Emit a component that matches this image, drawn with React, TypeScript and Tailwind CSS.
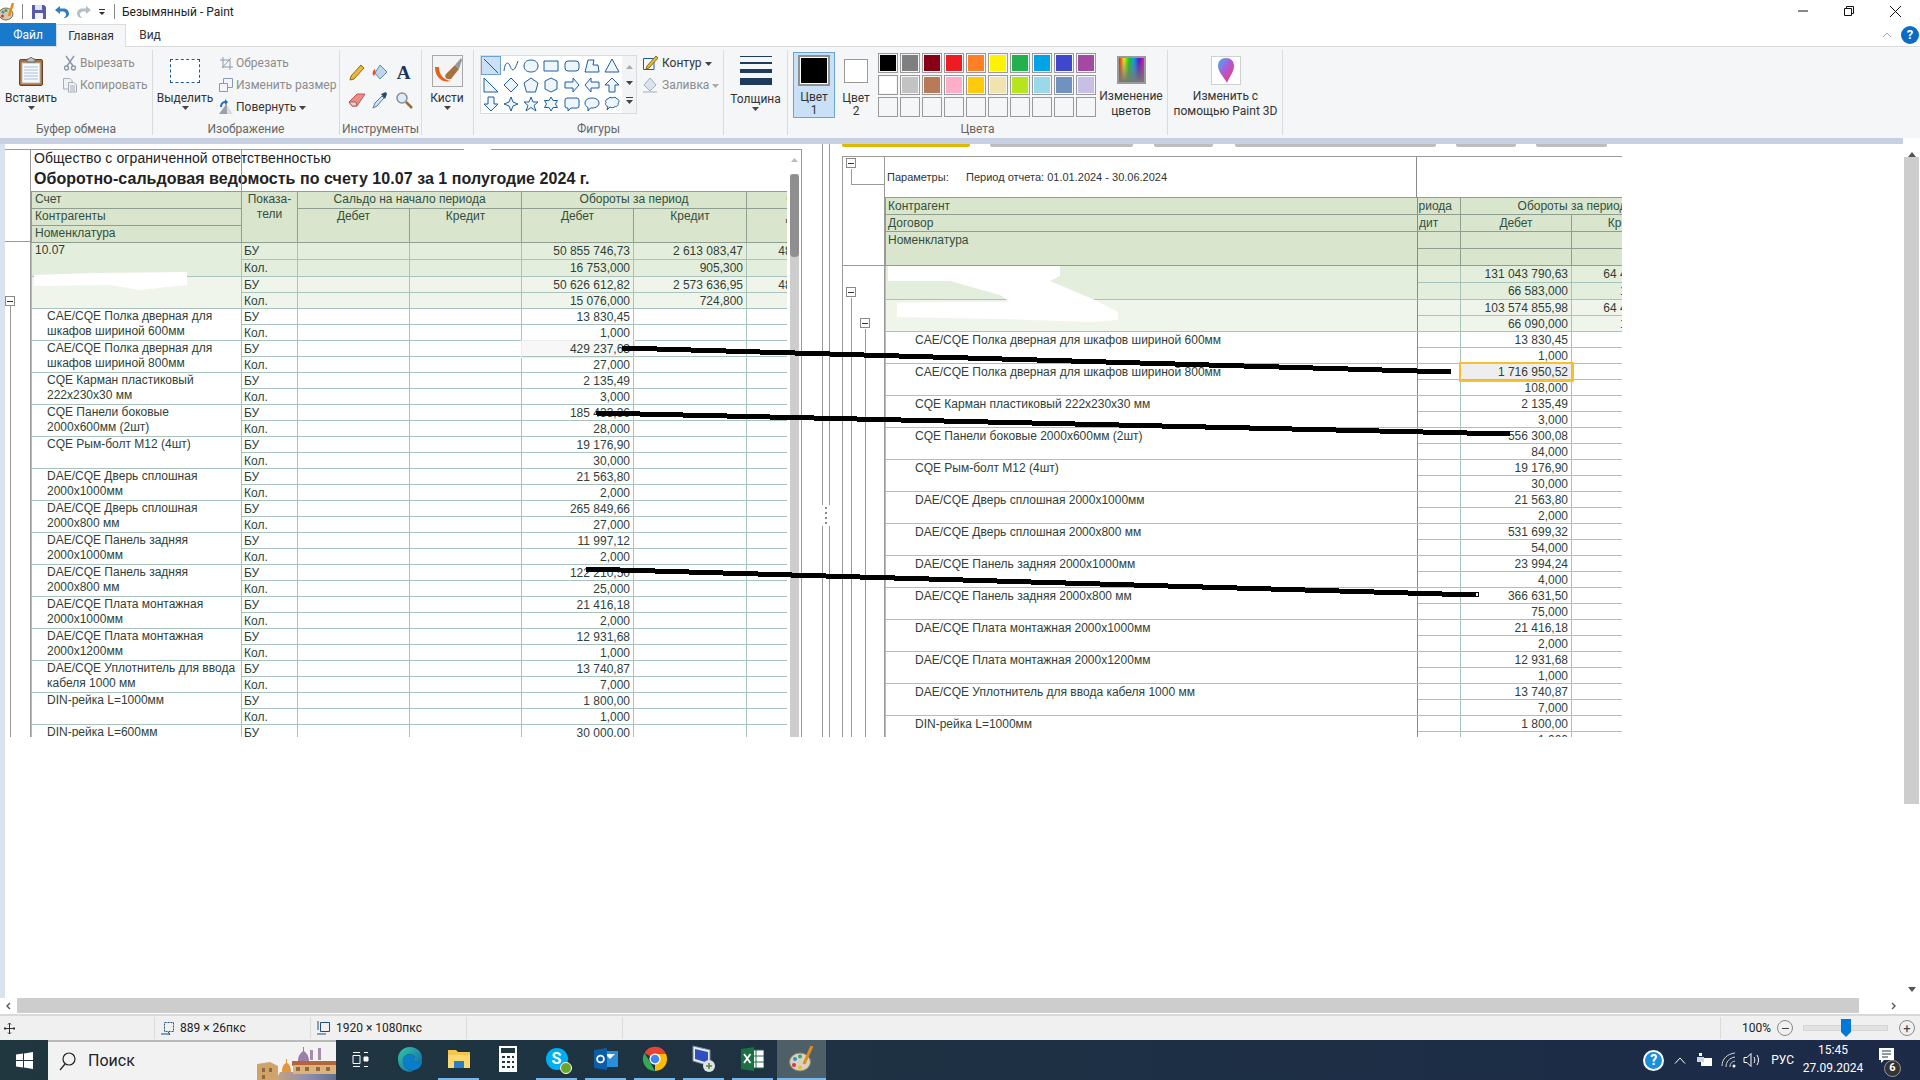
import React from 'react';

const sans = "font-['Roboto',sans-serif]";

const Caret = ({ color = '#444' }: { color?: string }) => (
  <svg width="7" height="4" viewBox="0 0 7 4" className="inline-block">
    <path d="M0 0h7L3.5 4z" fill={color} />
  </svg>
);

// shapes gallery, drawn in a 16x16 box
const shapes: { d: string }[] = [
  { d: 'M1 1L15 15' },
  { d: 'M1 13C2 4 5 3 7 8S11 15 15 3' },
  { d: 'M8 2C13 2 15 5 15 8S13 14 8 14 1 11 1 8 3 2 8 2z' },
  { d: 'M1 3H15V13H1z' },
  { d: 'M4 3H12Q15 3 15 6V10Q15 13 12 13H4Q1 13 1 10V6Q1 3 4 3z' },
  { d: 'M1 14L4 2H10L9 7H14L15 14z' },
  { d: 'M8 1L15 14H1z' },
  { d: 'M1 1L15 15H1z' },
  { d: 'M8 1L15 8 8 15 1 8z' },
  { d: 'M8 1L15 6 12.5 15H3.5L1 6z' },
  { d: 'M8 1L14 4V12L8 15 2 12V4z' },
  { d: 'M1 5H9V1L15 8 9 15V11H1z' },
  { d: 'M15 5H7V1L1 8 7 15V11H15z' },
  { d: 'M5 15V8H1L8 1 15 8H11V15z' },
  { d: 'M5 1V8H1L8 15 15 8H11V1z' },
  { d: 'M8 1L10 6 15 8 10 10 8 15 6 10 1 8 6 6z' },
  { d: 'M8 1L10 6H15L11 9.5 13 15 8 11.5 3 15 5 9.5 1 6H6z' },
  { d: 'M8 1L10 4.5H14.5L12.5 8 14.5 11.5H10L8 15 6 11.5H1.5L3.5 8 1.5 4.5H6z' },
  { d: 'M3 2H13Q15 2 15 4V10Q15 12 13 12H7L4 15V12H3Q1 12 1 10V4Q1 2 3 2z' },
  { d: 'M8 2C12 2 15 4 15 7S12 12 8 12H6.5L4 15V11.5C2 10.5 1 9 1 7 1 4 4 2 8 2z' },
  { d: 'M4 3C5 1 7 1 8 2 10 1 12 1 13 3 15 3 16 6 14 7 15 9 13 11 11 10.5 10 12 7 12 6 11L3 14 4 10.5C2 10 .5 8 2 6.5 1 5 2 3 4 3z' },
];

const palette = [
  ['#000000', '#7f7f7f', '#880015', '#ed1c24', '#ff7f27', '#fff200', '#22b14c', '#00a2e8', '#3f48cc', '#a349a4'],
  ['#ffffff', '#c3c3c3', '#b97a57', '#ffaec9', '#ffc90e', '#efe4b0', '#b5e61d', '#99d9ea', '#7092be', '#c8bfe7'],
  ['', '', '', '', '', '', '', '', '', ''],
];

const Group = ({ w, label, children }: { w: string; label?: string; children: React.ReactNode }) => (
  <div className={`${w} shrink-0 my-[3px] border-r border-[#dadbdc] flex flex-col`}>
    <div className="h-[72px] flex">{children}</div>
    <div className="h-[14px] leading-[16px] text-[12px] text-center text-[#666]">{label}</div>
  </div>
);

const SmallRow = ({ icon, text, off }: { icon: React.ReactNode; text: React.ReactNode; off?: boolean }) => (
  <div className={`h-[22px] flex items-center text-[12px] ${off ? 'text-[#8c8c8c]' : 'text-[#333]'}`}>
    <span className="w-[18px] flex justify-center shrink-0">{icon}</span>
    <span className="ml-[1px] whitespace-nowrap">{text}</span>
  </div>
);

const TitleBar = () => (
  <div className="h-[23px] flex items-center bg-white text-[12px] text-[#222]">
    <svg width="18" height="18" viewBox="0 0 18 18" className="ml-[-1px]">
      <ellipse cx="7" cy="11" rx="7" ry="6" fill="#d8c9a8" stroke="#7a6a4a" />
      <circle cx="4" cy="9" r="1.5" fill="#2f8fd6" />
      <circle cx="7" cy="7.5" r="1.5" fill="#3aa655" />
      <circle cx="3.5" cy="13" r="1.5" fill="#d33" />
      <path d="M14 0L10 13" stroke="#e08a1e" strokeWidth="2.5" />
    </svg>
    <div className="ml-[5px] w-px h-[15px] bg-[#888]" />
    <svg width="16" height="16" viewBox="0 0 16 16" className="ml-[8px]">
      <path d="M1 1H13L15 3V15H1z" fill="#5a5ba8" />
      <path d="M4 1H11V6H4z" fill="#dfe3f0" />
      <path d="M4 9H12V15H4z" fill="#f2f2f8" />
    </svg>
    <svg width="16" height="16" viewBox="0 0 16 16" className="ml-[7px]">
      <path d="M6 2L1 6 6 10V7.5H9C11 7.5 12 9 12 10.5S11 13 9.5 14C13 14 15 12 15 9.5 15 6.5 12.5 4.5 9.5 4.5H6z" fill="#2b7fc4" />
    </svg>
    <svg width="16" height="16" viewBox="0 0 16 16" className="ml-[6px]">
      <path d="M10 2L15 6 10 10V7.5H7C5 7.5 4 9 4 10.5S5 13 6.5 14C3 14 1 12 1 9.5 1 6.5 3.5 4.5 6.5 4.5H10z" fill="#b3c0cb" />
    </svg>
    <svg width="8" height="8" viewBox="0 0 8 8" className="ml-[6px]">
      <path d="M1 1H7V2H1zM1 4H7L4 7z" fill="#333" />
    </svg>
    <div className="ml-[8px] w-px h-[15px] bg-[#888]" />
    <span className="ml-[7px] whitespace-nowrap">Безымянный - Paint</span>
    <div className="ml-auto flex pr-[2px]">
      <div className="w-[46px] flex justify-center">
        <svg width="10" height="10" viewBox="0 0 10 10"><path d="M0 5H10" stroke="#111" /></svg>
      </div>
      <div className="w-[46px] flex justify-center">
        <svg width="10" height="10" viewBox="0 0 10 10" fill="none" stroke="#111"><path d="M.5 2.5H7.5V9.5H.5zM2.5 2.5V.5H9.5V7.5H7.5" /></svg>
      </div>
      <div className="w-[46px] flex justify-center">
        <svg width="11" height="11" viewBox="0 0 11 11"><path d="M0 0L11 11M11 0L0 11" stroke="#111" /></svg>
      </div>
    </div>
  </div>
);

const TabRow = () => (
  <div className="h-[23px] flex items-stretch bg-white text-[12px] relative">
    <div className="w-[56px] bg-[#1979ca] text-white flex items-center justify-center">Файл</div>
    <div className="w-[70px] bg-[#f5f6f7] border-x border-t border-[#dadbdc] text-[#333] flex items-center justify-center relative top-px z-10">Главная</div>
    <div className="w-[48px] text-[#333] flex items-center justify-center">Вид</div>
    <div className="ml-auto flex items-center">
      <svg width="10" height="6" viewBox="0 0 10 6" fill="none" className="mr-[9px]"><path d="M1 5L5 1 9 5" stroke="#aaa" /></svg>
      <div className="w-[18px] h-[18px] mr-[1px] rounded-full bg-[#0b6cc4] text-white font-bold text-[13px] flex items-center justify-center">?</div>
    </div>
  </div>
);

const Ribbon = () => (
  <div className={`h-[92px] flex bg-[#f5f6f7] border-t border-[#dadbdc] text-[#333] ${sans}`}>
    {/* Буфер обмена */}
    <Group w="w-[153px]" label="Буфер обмена">
      <div className="w-[58px] flex flex-col items-center pt-[7px] text-[12px] ml-[2px]">
        <svg width="24" height="29" viewBox="0 0 24 29">
          <rect x="0.5" y="2.5" width="23" height="26" rx="1.5" fill="#a9703d" stroke="#6b4320" />
          <rect x="3" y="6" width="18" height="20" fill="#f7f8fa" stroke="#b8bec6" />
          <path d="M5 10H19M5 13H19M5 16H19M5 19H19M5 22H19" stroke="#a8c0dc" />
          <path d="M8 5V2H10C10 0 14 0 14 2H16V5z" fill="#bfc3c9" stroke="#666" />
        </svg>
        <div className="leading-[16px] mt-[4px]">Вставить</div>
        <Caret />
      </div>
      <div className="pt-[2px] ml-[1px]">
        <SmallRow off text="Вырезать" icon={
          <svg width="12" height="16" viewBox="0 0 12 16" fill="none" stroke="#8a97a8" strokeWidth="1.4"><path d="M2 1L9 11M10 1L3 11" /><circle cx="2.5" cy="13" r="2" /><circle cx="9.5" cy="13" r="2" /></svg>
        } />
        <SmallRow off text="Копировать" icon={
          <svg width="16" height="16" viewBox="0 0 16 16" fill="#eef1f5" stroke="#a7aeb8"><path d="M1.5 1.5H8L10 3.5V12H1.5z" /><path d="M6.5 5.5H12L14.5 8V15H6.5z" /><path d="M8 9H13M8 11H13M8 13H13" /></svg>
        } />
      </div>
    </Group>
    {/* Изображение */}
    <Group w="w-[187px]" label="Изображение">
      <div className="w-[64px] flex flex-col items-center pt-[9px] text-[12px]">
        <div className="w-[30px] h-[24px] border border-dashed border-[#1e5a9a] bg-white" />
        <div className="leading-[16px] mt-[7px]">Выделить</div>
        <Caret />
      </div>
      <div className="pt-[2px]">
        <SmallRow off text="Обрезать" icon={
          <svg width="13" height="13" viewBox="0 0 13 13" fill="none" stroke="#8a9ab0"><path d="M3 0V10H13M0 3H10V13M11 1L2 11" /></svg>
        } />
        <SmallRow off text="Изменить размер" icon={
          <svg width="14" height="14" viewBox="0 0 14 14" fill="#f2f5f9" stroke="#8a9ab0"><path d="M4.5 .5H13.5V9.5H4.5z" /><path d="M.5 5.5H8.5V13.5H.5z" /></svg>
        } />
        <SmallRow text={<>Повернуть <Caret /></>} icon={
          <svg width="16" height="16" viewBox="0 0 16 16"><path d="M1 15L9 4V15z" fill="#9aa3ad" /><path d="M9 15V6L15 15z" fill="#d9dde2" /><path d="M2 8C2 4 5 2 7 2V0L10 3 7 6V4C5 4 4 6 4 8z" fill="#1f6fc0" /></svg>
        } />
      </div>
    </Group>
    {/* Инструменты */}
    <Group w="w-[82px]" label="Инструменты">
      <div className="grid grid-cols-[23px_24px_23px] grid-rows-[28px_28px] pl-[5px] pt-[8px] place-items-center">
        <svg width="16" height="18" viewBox="0 0 16 18"><path d="M2 13L12 2 15 5 5 16 1 17z" fill="#e9b83a" stroke="#8a6a1c" /></svg>
        <svg width="18" height="18" viewBox="0 0 18 18"><path d="M9 2L16 9 9 16 4 10z" fill="#bcd6ee" stroke="#5c8ab5" /><path d="M4 6C1 8 1 12 3 13 4 11 5 9 4 6z" fill="#e8501c" /></svg>
        <span className="font-['Liberation_Serif',serif] font-bold text-[19px] leading-none text-[#1d3557]">A</span>
        <svg width="18" height="14" viewBox="0 0 18 14"><path d="M1 9L9 1H17L9 13H4z" fill="#f08a84" stroke="#b65a55" /><path d="M1 9H8L9 13H4z" fill="#d8d8d8" stroke="#b65a55" /></svg>
        <svg width="16" height="18" viewBox="0 0 16 18"><path d="M1 17L3 12 10 5 12 7 5 15z" fill="#cfe4f6" stroke="#5a7c9c" /><path d="M9 3L14 1 15 3 13 8z" fill="#25496e" /></svg>
        <svg width="18" height="18" viewBox="0 0 18 18" fill="none"><circle cx="7" cy="7" r="5" fill="#dcecf8" stroke="#8a8f96" strokeWidth="1.5" /><path d="M11 11L17 17" stroke="#9a6b2e" strokeWidth="2.5" /></svg>
      </div>
    </Group>
    {/* Кисти */}
    <Group w="w-[52px]" label="">
      <div className="w-[48px] flex flex-col items-center pt-[5px] text-[12px] ml-[1px]">
        <svg width="31" height="32" viewBox="0 0 31 32">
          <rect x="0.5" y="0.5" width="30" height="31" fill="#f4f4f4" stroke="#a8a8a8" />
          <path d="M3 12C3 24 12 28 19 26 12 25 7 20 7 12z" fill="#e8601c" />
          <path d="M14 19L23 10 27 14 19 24C14 25 12 22 14 19z" fill="#a5713d" />
          <path d="M23 10L29 3 30 5 27 14z" fill="#8f99a6" />
        </svg>
        <div className="leading-[16px] mt-[3px]">Кисти</div>
        <Caret />
      </div>
    </Group>
    {/* Фигуры */}
    <Group w="w-[250px]" label="Фигуры">
      <div className="ml-[6px] mt-[5px] w-[157px] h-[59px] border border-[#dadbdc] bg-white flex">
        <div className="w-[141px] grid grid-cols-7 grid-rows-3">
          {shapes.map((s, i) => (
            <div key={i} className={`flex items-center justify-center ${i === 0 ? 'bg-[#c9e0f7] border border-[#6aa3d8]' : ''}`}>
              <svg width="16" height="16" viewBox="0 0 16 16" fill={i < 2 ? 'none' : '#eef5fb'} stroke="#1d5f9e" strokeLinejoin="round"><path d={s.d} /></svg>
            </div>
          ))}
        </div>
        <div className="flex-1 bg-[#f2f3f5] flex flex-col items-center justify-around py-[3px]">
          <svg width="7" height="4" viewBox="0 0 7 4"><path d="M0 4L3.5 0 7 4z" fill="#aaa" /></svg>
          <Caret />
          <svg width="7" height="7" viewBox="0 0 7 7"><path d="M0 0H7V1H0zM0 3H7L3.5 7z" fill="#444" /></svg>
        </div>
      </div>
      <div className="pt-[2px] ml-[4px]">
        <SmallRow text={<span className="ml-[2px]">Контур <Caret /></span>} icon={
          <svg width="16" height="16" viewBox="0 0 16 16" fill="none"><path d="M1.5 3.5H12V14.5H1.5z" stroke="#1d5f9e" /><path d="M5 11L14 1 16 3 7 13 4 14z" fill="#e9b83a" stroke="#8a6a1c" /></svg>
        } />
        <SmallRow off text={<span className="ml-[2px]">Заливка <Caret color="#aaa" /></span>} icon={
          <svg width="16" height="16" viewBox="0 0 16 16"><path d="M8 1L14 8 8 14 2 8z" fill="#dbe4ee" stroke="#9fb0c2" /><path d="M1 14H15V16H1z" fill="#c9d2dc" /></svg>
        } />
      </div>
    </Group>
    {/* Толщина */}
    <Group w="w-[64px]" label="">
      <div className="w-[63px] flex flex-col items-center pt-[6px] text-[12px]">
        <div className="w-[32px] flex flex-col">
          <div className="h-px bg-[#1f3a5f]" />
          <div className="h-[2px] mt-[5px] bg-[#1f3a5f]" />
          <div className="h-[4px] mt-[5px] bg-[#1f3a5f]" />
          <div className="h-[7px] mt-[5px] bg-[#1f3a5f]" />
        </div>
        <div className="leading-[16px] mt-[6px]">Толщина</div>
        <Caret />
      </div>
    </Group>
    {/* Цвета */}
    <Group w="w-[380px]" label="Цвета">
      <div className="ml-[5px] mt-[2px] w-[42px] h-[66px] bg-[#c9e0f7] border border-[#6aa3d8] flex flex-col items-center pt-[2px] text-[12px] leading-[14px]">
        <div className="w-[32px] h-[32px] bg-black border-2 border-[#8f8f8f] outline outline-1 outline-white -outline-offset-[3px]" />
        <div className="mt-[4px]">Цвет</div>
        <div className="mt-[-1px]">1</div>
      </div>
      <div className="ml-[8px] w-[26px] flex flex-col items-center pt-[9px] text-[12px] leading-[14px]">
        <div className="w-[24px] h-[24px] bg-white border border-[#9a9a9a]" />
        <div className="mt-[8px]">Цвет</div>
        <div className="mt-[-1px]">2</div>
      </div>
      <div className="ml-[9px] mt-[3px] grid grid-cols-10 gap-[2px] h-[64px] w-[218px]">
        {palette.flat().map((c, i) => (
          <div key={i} className="w-[20px] h-[20px] border border-[#9a9a9a] p-px">
            <div className="w-full h-full" style={{ background: c || 'transparent' }} />
          </div>
        ))}
      </div>
      <div className="ml-[1px] w-[68px] flex flex-col items-center pt-[6px] text-[12px] leading-[15px]">
        <div className="w-[29px] h-[28px] border-2 border-[#9a9a9a] bg-[linear-gradient(to_bottom,transparent,#777),linear-gradient(to_right,#ee1111,#eeee11,#11cc22,#1199ee,#5511cc,#ee11aa)]" />
        <div className="mt-[5px] whitespace-nowrap">Изменение</div>
        <div>цветов</div>
      </div>
    </Group>
    {/* Paint 3D */}
    <Group w="w-[115px]" label="">
      <div className="w-full flex flex-col items-center pt-[6px] text-[12px] leading-[15px] ml-[1px]">
        <div className="w-[30px] h-[29px] border border-[#d0d0d0] bg-white flex items-center justify-center">
          <svg width="16" height="25" viewBox="0 0 16 25">
            <defs>
              <linearGradient id="drop" x1="0" y1="0" x2="1" y2="1">
                <stop offset="0" stopColor="#35b8f0" />
                <stop offset="0.45" stopColor="#b05ad8" />
                <stop offset="1" stopColor="#f03a5c" />
              </linearGradient>
            </defs>
            <path d="M8 0C13 0 16 3 16 8 16 14 11 19 9 25 6 19 0 14 0 8 0 3 3 0 8 0z" fill="url(#drop)" />
          </svg>
        </div>
        <div className="mt-[4px] whitespace-nowrap">Изменить с</div>
        <div className="whitespace-nowrap">помощью Paint 3D</div>
      </div>
    </Group>
    <div className="flex-1" />
  </div>
);

type Row = { name: string[]; sum: string; qty: string };

const leftRows: Row[] = [
  { name: ['CAE/CQE Полка дверная для', 'шкафов шириной 600мм'], sum: '13 830,45', qty: '1,000' },
  { name: ['CAE/CQE Полка дверная для', 'шкафов шириной 800мм'], sum: '429 237,63', qty: '27,000' },
  { name: ['CQE Карман пластиковый', '222х230х30 мм'], sum: '2 135,49', qty: '3,000' },
  { name: ['CQE Панели боковые', '2000х600мм (2шт)'], sum: '185 433,36', qty: '28,000' },
  { name: ['CQE Рым-болт М12 (4шт)'], sum: '19 176,90', qty: '30,000' },
  { name: ['DAE/CQE Дверь сплошная', '2000х1000мм'], sum: '21 563,80', qty: '2,000' },
  { name: ['DAE/CQE Дверь сплошная', '2000х800 мм'], sum: '265 849,66', qty: '27,000' },
  { name: ['DAE/CQE Панель задняя', '2000х1000мм'], sum: '11 997,12', qty: '2,000' },
  { name: ['DAE/CQE Панель задняя', '2000х800 мм'], sum: '122 210,50', qty: '25,000' },
  { name: ['DAE/CQE Плата монтажная', '2000х1000мм'], sum: '21 416,18', qty: '2,000' },
  { name: ['DAE/CQE Плата монтажная', '2000х1200мм'], sum: '12 931,68', qty: '1,000' },
  { name: ['DAE/CQE Уплотнитель для ввода', 'кабеля 1000 мм'], sum: '13 740,87', qty: '7,000' },
  { name: ['DIN-рейка L=1000мм'], sum: '1 800,00', qty: '1,000' },
  { name: ['DIN-рейка L=600мм'], sum: '30 000,00', qty: '' },
];

const rightRows: Row[] = [
  { name: ['CAE/CQE Полка дверная для шкафов шириной 600мм'], sum: '13 830,45', qty: '1,000' },
  { name: ['CAE/CQE Полка дверная для шкафов шириной 800мм'], sum: '1 716 950,52', qty: '108,000' },
  { name: ['CQE Карман пластиковый 222х230х30 мм'], sum: '2 135,49', qty: '3,000' },
  { name: ['CQE Панели боковые 2000х600мм (2шт)'], sum: '556 300,08', qty: '84,000' },
  { name: ['CQE Рым-болт М12 (4шт)'], sum: '19 176,90', qty: '30,000' },
  { name: ['DAE/CQE Дверь сплошная 2000х1000мм'], sum: '21 563,80', qty: '2,000' },
  { name: ['DAE/CQE Дверь сплошная 2000х800 мм'], sum: '531 699,32', qty: '54,000' },
  { name: ['DAE/CQE Панель задняя 2000х1000мм'], sum: '23 994,24', qty: '4,000' },
  { name: ['DAE/CQE Панель задняя 2000х800 мм'], sum: '366 631,50', qty: '75,000' },
  { name: ['DAE/CQE Плата монтажная 2000х1000мм'], sum: '21 416,18', qty: '2,000' },
  { name: ['DAE/CQE Плата монтажная 2000х1200мм'], sum: '12 931,68', qty: '1,000' },
  { name: ['DAE/CQE Уплотнитель для ввода кабеля 1000 мм'], sum: '13 740,87', qty: '7,000' },
  { name: ['DIN-рейка L=1000мм'], sum: '1 800,00', qty: '1,000' },
];

const hd = 'bg-[#d9e5cd] border border-[#8f9f8f] p-0 align-top font-normal text-[#33503f] text-center leading-[15px]';
const cell = 'border border-[#a8c2bc] p-0 whitespace-nowrap';
const num = `${cell} text-right pr-[3px]`;

const LeftTable = () => (
  <table className="table-fixed border-collapse w-[939px] text-[12px] leading-[14px] text-[#333]">
    <colgroup>
      <col className="w-[210px]" />
      <col className="w-[56px]" />
      <col className="w-[112px]" />
      <col className="w-[112px]" />
      <col className="w-[112px]" />
      <col className="w-[113px]" />
      <col className="w-[112px]" />
      <col className="w-[112px]" />
    </colgroup>
    <thead>
      <tr className="h-[17px]">
        <th className={`${hd} !text-left pl-[3px]`}>Счет</th>
        <th rowSpan={3} className={hd}>Показа-<br />тели</th>
        <th colSpan={2} className={hd}>Сальдо на начало периода</th>
        <th colSpan={2} className={hd}>Обороты за период</th>
        <th colSpan={2} className={hd}>Сальдо на конец периода</th>
      </tr>
      <tr className="h-[17px]">
        <th className={`${hd} !text-left pl-[3px]`}>Контрагенты</th>
        {['Дебет', 'Кредит', 'Дебет', 'Кредит', 'Дебет', 'Кредит'].map((t, i) => (
          <th key={i} rowSpan={2} className={hd}>{t}</th>
        ))}
      </tr>
      <tr className="h-[17px]">
        <th className={`${hd} !text-left pl-[3px]`}>Номенклатура</th>
      </tr>
    </thead>
    <tbody className="text-[#2f3f38]">
      <tr className="h-[17px] bg-[#e4eedc]">
        <td rowSpan={2} className={`${cell} align-top pl-[3px]`}>10.07</td>
        <td className={`${cell} pl-[2px]`}>БУ</td>
        <td className={cell} /><td className={cell} />
        <td className={num}>50 855 746,73</td>
        <td className={num}>2 613 083,47</td>
        <td className={num}>48 242 663,26</td>
        <td className={cell} />
      </tr>
      <tr className="h-[17px] bg-[#e4eedc]">
        <td className={`${cell} pl-[2px]`}>Кол.</td>
        <td className={cell} /><td className={cell} />
        <td className={num}>16 753,000</td>
        <td className={num}>905,300</td>
        <td className={cell} /><td className={cell} />
      </tr>
      <tr className="h-[16px] bg-[#f0f5ec]">
        <td rowSpan={2} className={cell} />
        <td className={`${cell} pl-[2px]`}>БУ</td>
        <td className={cell} /><td className={cell} />
        <td className={num}>50 626 612,82</td>
        <td className={num}>2 573 636,95</td>
        <td className={num}>48 052 975,87</td>
        <td className={cell} />
      </tr>
      <tr className="h-[16px] bg-[#f0f5ec]">
        <td className={`${cell} pl-[2px]`}>Кол.</td>
        <td className={cell} /><td className={cell} />
        <td className={num}>15 076,000</td>
        <td className={num}>724,800</td>
        <td className={cell} /><td className={cell} />
      </tr>
      {leftRows.map((r) => (
        <React.Fragment key={r.name.join() + r.sum}>
          <tr className="h-[16px]">
            <td rowSpan={2} className={`${cell} align-top pl-[15px] leading-[15px]`}>
              {r.name.map((n) => <div key={n}>{n}</div>)}
            </td>
            <td className={`${cell} pl-[2px]`}>БУ</td>
            <td className={cell} /><td className={cell} />
            <td className={`${num} ${r.sum === '429 237,63' ? 'bg-[#f7f7f7] outline outline-[#ececec]' : ''}`}>{r.sum}</td>
            <td className={cell} /><td className={cell} /><td className={cell} />
          </tr>
          <tr className="h-[16px]">
            <td className={`${cell} pl-[2px]`}>Кол.</td>
            <td className={cell} /><td className={cell} />
            <td className={num}>{r.qty}</td>
            <td className={cell} /><td className={cell} /><td className={cell} />
          </tr>
        </React.Fragment>
      ))}
    </tbody>
  </table>
);

const nameEdge = 'border-r-[#8a8a8a]';

const RightTable = () => (
  <table className="table-fixed border-collapse w-[798px] text-[12px] leading-[14px] text-[#333]">
    <colgroup>
      <col className="w-[532px]" />
      <col className="w-[43px]" />
      <col className="w-[111px]" />
      <col className="w-[112px]" />
    </colgroup>
    <thead>
      <tr className="h-[17px]">
        <th className={`${hd} !text-left pl-[2px] pt-[1px] ${nameEdge}`}>Контрагент</th>
        <th className={`${hd} !text-right pr-[8px] pt-[1px]`}>риода</th>
        <th colSpan={2} className={`${hd} pt-[1px]`}>Обороты за период</th>
      </tr>
      <tr className="h-[17px]">
        <th className={`${hd} !text-left pl-[2px] pt-[1px] ${nameEdge}`}>Договор</th>
        <th className={`${hd} !text-left pl-[1px] pt-[1px]`}>дит</th>
        <th className={`${hd} pt-[1px]`}>Дебет</th>
        <th className={`${hd} pt-[1px]`}>Кредит</th>
      </tr>
      <tr className="h-[17px]">
        <th rowSpan={2} className={`${hd} !text-left pl-[2px] pt-[1px] ${nameEdge}`}>Номенклатура</th>
        <th className={hd} /><th className={hd} /><th className={hd} />
      </tr>
      <tr className="h-[17px]">
        <th className={hd} /><th className={hd} /><th className={hd} />
      </tr>
    </thead>
    <tbody className="text-[#2f3f38]">
      <tr className="h-[17px] bg-[#e4eedc]">
        <td rowSpan={2} className={`${cell} ${nameEdge}`} />
        <td className={cell} />
        <td className={num}>131 043 790,63</td>
        <td className={num}>64 410 875,48</td>
      </tr>
      <tr className="h-[17px] bg-[#e4eedc]">
        <td className={cell} />
        <td className={num}>66 583,000</td>
        <td className={num}>18 430,000</td>
      </tr>
      <tr className="h-[16px] bg-[#f0f5ec]">
        <td rowSpan={2} className={`${cell} ${nameEdge}`} />
        <td className={cell} />
        <td className={num}>103 574 855,98</td>
        <td className={num}>64 420 102,31</td>
      </tr>
      <tr className="h-[16px] bg-[#f0f5ec]">
        <td className={cell} />
        <td className={num}>66 090,000</td>
        <td className={num}>14 920,000</td>
      </tr>
      {rightRows.map((r) => {
        const picked = r.sum === '1 716 950,52';
        return (
          <React.Fragment key={r.sum + r.qty}>
            <tr className="h-[16px]">
              <td rowSpan={2} className={`${cell} ${nameEdge} align-top pl-[29px] pt-[1px]`}>{r.name[0]}</td>
              <td className={cell} />
              <td className={`${num} ${picked ? 'bg-[#eeeeee] outline-2 outline-[#f5c12e] relative' : ''}`}>{r.sum}</td>
              <td className={cell} />
            </tr>
            <tr className="h-[16px]">
              <td className={cell} />
              <td className={num}>{r.qty}</td>
              <td className={cell} />
            </tr>
          </React.Fragment>
        );
      })}
    </tbody>
  </table>
);

const MinusBox = ({ x, y }: { x: number; y: number }) => (
  <g>
    <rect x={x + 0.5} y={y + 0.5} width="9" height="9" fill="#fff" stroke="#8a8a8a" />
    <path d={`M${x + 2} ${y + 5}H${x + 8}`} stroke="#333" shapeRendering="crispEdges" />
  </g>
);

const LeftPanel = () => (
  <div className="flex w-[797px] h-[588px] mt-[5px] border-t border-r border-[#9a9a9a] relative">
    <svg width="25" height="587" className="shrink-0" fill="none" stroke="#9a9a9a" shapeRendering="crispEdges">
      <path d="M0 91.5H25M5.5 155V587" />
      <MinusBox x={0} y={146} />
    </svg>
    <div className="w-[757px] border-l border-[#9a9a9a] overflow-hidden relative font-['Liberation_Sans',Arial,sans-serif]">
      <div className="h-[41px] bg-white text-[#222]">
        <div className="text-[14px] leading-[17px] pl-[3px] tracking-[0.1px]">Общество с ограниченной ответственностью</div>
        <div className="text-[16px] leading-[20px] font-bold pl-[3px] mt-[2px] whitespace-nowrap tracking-[0.05px]">Оборотно-сальдовая ведомость по счету 10.07 за 1 полугодие 2024 г.</div>
      </div>
      <LeftTable />
      <div className="absolute left-[210px] top-0 h-[41px] w-px bg-[#9a9a9a]" />
    </div>
    <div className="ml-[3px] w-[9px] flex flex-col bg-[#cdcdcd] relative">
      <div className="h-[24px] bg-white flex items-start justify-center pt-[8px]">
        <svg width="7" height="4" viewBox="0 0 7 4"><path d="M0 4L3.5 0 7 4z" fill="#bbb" /></svg>
      </div>
      <div className="h-[83px] bg-[#8f8f8f] rounded-[4px]" />
    </div>
    <div className="absolute -top-px left-[459px] w-[27px] h-[2px] bg-white" />
  </div>
);

const RightPanel = () => (
  <div className="flex ml-[20px] h-[593px]">
    <div className="w-[8px] border-x border-[#9a9a9a] relative">
      <div className="absolute -left-[1px] top-[361px] w-[8px] flex flex-col items-center gap-[3px] bg-white py-[2px]">
        <div className="w-[2px] h-[2px] bg-[#888]" />
        <div className="w-[2px] h-[2px] bg-[#888]" />
        <div className="w-[2px] h-[2px] bg-[#888]" />
        <div className="w-[2px] h-[2px] bg-[#888]" />
      </div>
    </div>
    <div className="ml-[12px] flex flex-col">
      <div className="h-[3px] flex">
        <div className="w-[128px] bg-[#e0b800] rounded-b-[2px]" />
        <div className="ml-[20px] w-[143px] bg-[#bdbdbd] rounded-b-[2px]" />
        <div className="ml-[21px] w-[59px] bg-[#bdbdbd] rounded-b-[2px]" />
        <div className="ml-[22px] w-[201px] bg-[#bdbdbd] rounded-b-[2px]" />
        <div className="ml-[20px] w-[60px] bg-[#bdbdbd] rounded-b-[2px]" />
        <div className="ml-[20px] w-[71px] bg-[#bdbdbd] rounded-b-[2px]" />
      </div>
      <div className="mt-[9px] w-[780px] h-[581px] flex border-t border-[#9a9a9a]">
        <svg width="42" height="580" className="shrink-0 border-l border-[#9a9a9a]" fill="none" stroke="#9a9a9a" shapeRendering="crispEdges">
          <path d="M8.5 12V27.5H42M0 108.5H42M8.5 141V580M22 172V580" />
          <MinusBox x={3} y={1} />
          <MinusBox x={3} y={130} />
          <MinusBox x={17} y={161} />
        </svg>
        <div className="w-[738px] overflow-hidden border-l border-[#9a9a9a] font-['Liberation_Sans',Arial,sans-serif]">
          <div className="h-[40px] w-[532px] border-r border-[#8a8a8a] bg-white flex items-center text-[11px] text-[#333]">
            <span className="ml-[2px] w-[79px]">Параметры:</span>
            <span>Период отчета: 01.01.2024 - 30.06.2024</span>
          </div>
          <RightTable />
        </div>
      </div>
    </div>
  </div>
);

const Canvas = () => (
  <div className="h-[860px] flex">
    <div className="flex-1 flex flex-col">
      <div className="h-[6px] bg-[#c7d1e3]" />
      <div className="flex-1 flex bg-white border-l-[5px] border-[#d9e2f1]">
        <LeftPanel />
        <RightPanel />
      </div>
    </div>
    <div className="w-[17px] flex flex-col items-stretch bg-white">
      <div className="h-[19px] flex items-end justify-center">
        <svg width="8" height="5" viewBox="0 0 8 5"><path d="M0 5L4 0 8 5z" fill="#555" /></svg>
      </div>
      <div className="mt-[0px] h-[647px] mx-[1px] bg-[#cdcdcd]" />
      <div className="flex-1 flex items-end justify-center pb-[6px]">
        <svg width="8" height="5" viewBox="0 0 8 5"><path d="M0 0L4 5 8 0z" fill="#555" /></svg>
      </div>
    </div>
  </div>
);

const HScroll = () => (
  <div className="h-[16px] flex bg-white">
    <div className="w-[17px] h-[15px] flex items-center justify-center">
      <svg width="5" height="8" viewBox="0 0 5 8" fill="none"><path d="M4 1L1 4 4 7" stroke="#555" strokeWidth="1.4" /></svg>
    </div>
    <div className="w-[1842px] h-[15px] bg-[#cdcdcd]" />
    <div className="w-[61px] h-[15px] flex items-center pl-[32px]">
      <svg width="5" height="8" viewBox="0 0 5 8" fill="none"><path d="M1 1L4 4 1 7" stroke="#555" strokeWidth="1.4" /></svg>
    </div>
  </div>
);

const StatusCell = ({ children, w }: { children?: React.ReactNode; w: string }) => (
  <div className={`${w} my-[1px] border-r border-[#dcdcdc] flex items-center pl-[10px] gap-[3px] text-[12px] text-[#222]`}>{children}</div>
);

const StatusBar = () => (
  <div className={`h-[26px] flex bg-[#f0f0f0] border-t-2 border-[#d9d9d9] ${sans}`}>
    <StatusCell w="w-[155px] !pl-[4px]">
      <svg width="11" height="11" viewBox="0 0 11 11" fill="none" stroke="#333"><path d="M5.5 0V11M0 5.5H11M4 1.5L5.5 0 7 1.5M4 9.5L5.5 11 7 9.5M1.5 4L0 5.5 1.5 7M9.5 4L11 5.5 9.5 7" /></svg>
    </StatusCell>
    <StatusCell w="w-[156px] !pl-[6px]">
      <svg width="14" height="14" viewBox="0 0 14 14" fill="none" stroke="#1d4f7a"><path d="M3.5 1.5H12.5V10.5H3.5z" strokeDasharray="2 1" /><path d="M0 13H9M7 11L9 13 7 15" /></svg>
      <span className="ml-[2px]">889 × 26пкс</span>
    </StatusCell>
    <StatusCell w="w-[156px] !pl-[6px]">
      <svg width="14" height="14" viewBox="0 0 14 14" fill="none" stroke="#1d4f7a"><path d="M3.5 1.5H12.5V10.5H3.5z" /><path d="M0 13H9M1 0V9" /></svg>
      <span className="ml-[2px]">1920 × 1080пкс</span>
    </StatusCell>
    <StatusCell w="w-[156px]" />
    <StatusCell w="w-[1098px]" />
    <div className="flex-1 flex items-center text-[12px] text-[#222]">
      <span className="ml-[21px] w-[31px]">100%</span>
      <span className="ml-[4px] w-[16px] h-[16px] rounded-full border border-[#888] flex items-center justify-center">
        <span className="w-[7px] h-px bg-[#444]" />
      </span>
      <div className="ml-[10px] w-[85px] h-[6px] bg-[#e2e2e2] border border-[#d4d4d4] flex justify-start relative">
        <svg width="10" height="18" viewBox="0 0 10 18" className="absolute left-[37px] -top-[7px]"><path d="M0 0H10V13L5 18 0 13z" fill="#0078d7" /></svg>
      </div>
      <span className="ml-[11px] w-[16px] h-[16px] rounded-full border border-[#888] flex items-center justify-center text-[13px] leading-none text-[#444]">+</span>
    </div>
  </div>
);

const BingPicture = () => (
  <svg width="80" height="38" viewBox="0 0 80 38" className="absolute right-0 top-0">
    <defs>
      <linearGradient id="water" x1="0" y1="0" x2="1" y2="0">
        <stop offset="0" stopColor="#c9a27c" />
        <stop offset="0.5" stopColor="#8f8fb0" />
        <stop offset="1" stopColor="#5f6f8f" />
      </linearGradient>
    </defs>
    <path d="M20 38L24 30H80V38z" fill="url(#water)" />
    <path d="M1 22L14 20 22 24V38H1z" fill="#d0a36a" />
    <path d="M6 26H9V30H6zM13 26H16V30H13zM6 33H9V37H6z" fill="#8a6a44" />
    <path d="M26 30C26 24 28 22 30 21V17H31V21C33 22 35 24 35 30z" fill="#e3963a" />
    <path d="M42 19C42 13 45 11 47 9V5H48V9C50 11 53 13 53 19z" fill="#9a80a8" />
    <path d="M54 8H57V18H54zM62 6H65V18H62z" fill="#a58ca8" />
    <path d="M36 19H80V24H36z" fill="#b5653a" />
    <path d="M37 23H80V32H37z" fill="#dcb27a" />
    <path d="M40 25H44V29H40zM49 25H53V29H49zM60 25H64V29H60zM70 25H74V29H70z" fill="#8c6a42" />
  </svg>
);

const TaskCell = ({ active, on, children }: { active?: boolean; on?: boolean; children?: React.ReactNode }) => (
  <div className={`w-[49px] shrink-0 flex flex-col ${active ? 'bg-[#4e5f68]' : ''}`}>
    <div className="flex-1 flex items-center justify-center">{children}</div>
    <div className={`h-[2px] ${active ? 'bg-[#76b9ed]' : on ? 'mx-[4px] bg-[#76b9ed]' : ''}`} />
  </div>
);

const Taskbar = () => (
  <div className={`h-[40px] flex bg-linear-to-r from-[#20373f] to-[#1c2a48] text-white ${sans}`}>
    <div className="w-[48px] flex items-center justify-center">
      <svg width="17" height="17" viewBox="0 0 17 17" fill="#fff"><path d="M0 2.5L7 1.5V8H0zM8 1.4L17 0V8H8zM0 9H7V15.5L0 14.5zM8 9H17V17L8 15.6z" /></svg>
    </div>
    <div className="w-[288px] bg-[#f2f2f2] border-t-2 border-[#b9b9b9] flex items-center relative text-[#222] text-[16px]">
      <svg width="17" height="19" viewBox="0 0 17 19" fill="none" stroke="#222" strokeWidth="1.2" className="ml-[11px]"><circle cx="10" cy="7" r="6" /><path d="M6 12L1 18" /></svg>
      <span className="ml-[12px]">Поиск</span>
      <BingPicture />
    </div>
    <TaskCell>
      <svg width="17" height="17" viewBox="0 0 17 17" fill="none" stroke="#fff"><path d="M1 1.5H8M1 15.5H8M1 4.5H8V12.5H1zM12 1.5H16M12 15.5H16" /><path d="M12 6H16V10H12z" fill="#fff" /></svg>
    </TaskCell>
    <TaskCell>
      <svg width="26" height="26" viewBox="0 0 26 26">
        <defs>
          <linearGradient id="edge" x1="0" y1="0" x2="1" y2="1">
            <stop offset="0" stopColor="#36c9a0" />
            <stop offset="1" stopColor="#0b5fb0" />
          </linearGradient>
        </defs>
        <path d="M13 1C20 1 25 6 25 12 25 16 21 17 18 16 15 15 16 12 18 11 16 7 8 7 6 13 5 19 10 25 17 24 15 26 12 26 10 25.5 4 24 1 19 1 13 1 6 6 1 13 1z" fill="url(#edge)" />
        <path d="M6 13C8 7 16 7 18 11 16 12 15 15 18 16 21 17 25 16 25 12V15C25 20 21 24 17 24 10 25 5 19 6 13z" fill="#0a7ecb" />
      </svg>
    </TaskCell>
    <TaskCell on>
      <svg width="22" height="20" viewBox="0 0 22 20"><path d="M0 1H8L10 3H22V19H0z" fill="#f4c64e" /><path d="M0 6H22V19H0z" fill="#fbd96c" /><path d="M6 12H16V19H6z" fill="#2a7fc8" /></svg>
    </TaskCell>
    <TaskCell>
      <svg width="18" height="26" viewBox="0 0 18 26">
        <path d="M0 0H18V26H0z" fill="#fff" />
        <path d="M2 2H16V7H2z" fill="#20373f" />
        <path d="M3 10H6V12H3zM8 10H11V12H8zM13 10H15V12H13zM3 15H6V17H3zM8 15H11V17H8zM13 15H15V17H13zM3 20H6V22H3zM8 20H11V22H8zM13 20H15V22H13z" fill="#20373f" />
      </svg>
    </TaskCell>
    <TaskCell on>
      <span className="relative w-[24px] h-[26px] flex items-center justify-center">
        <span className="w-[22px] h-[22px] rounded-full bg-[#00aff0] text-white font-bold text-[16px] flex items-center justify-center">S</span>
        <span className="absolute right-[-3px] bottom-[-2px] w-[12px] h-[12px] rounded-full bg-[#6aa62b] border border-white" />
      </span>
    </TaskCell>
    <TaskCell on>
      <svg width="24" height="22" viewBox="0 0 24 22">
        <path d="M8 3H24V19H8z" fill="#2a8fd8" />
        <path d="M11 6H21L16 11z" fill="#fff" />
        <path d="M0 2L13 0V22L0 20z" fill="#0a5ea8" />
        <circle cx="6.5" cy="11" r="3.4" fill="none" stroke="#fff" strokeWidth="1.8" />
      </svg>
    </TaskCell>
    <TaskCell on>
      <svg width="26" height="26" viewBox="0 0 26 26">
        <path d="M13 13L2.5 7A12 12 0 0 1 24 8H13z" fill="#ea4335" />
        <path d="M13 25A12 12 0 0 0 24 8H13z" fill="#fbbc05" />
        <path d="M13 25A12 12 0 0 1 2.5 7L8 16z" fill="#34a853" />
        <circle cx="13" cy="13" r="5.6" fill="#fff" />
        <circle cx="13" cy="13" r="4.3" fill="#4285f4" />
      </svg>
    </TaskCell>
    <TaskCell on>
      <svg width="26" height="28" viewBox="0 0 26 28">
        <path d="M2 1L19 5V21L2 16z" fill="#e8eef8" stroke="#7c8aa8" />
        <path d="M4 4L17 7V18L4 14z" fill="#2f4fc0" />
        <circle cx="18" cy="21" r="6" fill="#dfe2e6" />
        <path d="M15 21H21M18 18V24" stroke="#4d8a3a" strokeWidth="1.6" />
      </svg>
    </TaskCell>
    <TaskCell on>
      <svg width="23" height="24" viewBox="0 0 23 24">
        <path d="M9 3H23V21H9z" fill="#fff" stroke="#1d7044" />
        <path d="M15 3V21M9 9H23M9 15H23" stroke="#1d7044" />
        <path d="M0 2L13 0V24L0 22z" fill="#1d7044" />
        <path d="M3 7L9.5 16M9.5 7L3 16" stroke="#fff" strokeWidth="1.8" />
      </svg>
    </TaskCell>
    <TaskCell active>
      <svg width="26" height="26" viewBox="0 0 26 26">
        <ellipse cx="11" cy="16" rx="10.5" ry="9" fill="#d9d2c0" stroke="#8d8570" />
        <circle cx="6" cy="13" r="2" fill="#2f8fd6" />
        <circle cx="11" cy="10.5" r="2" fill="#3aa655" />
        <circle cx="5" cy="19" r="2" fill="#d33" />
        <circle cx="11" cy="21.5" r="2" fill="#e8c02c" />
        <path d="M23 0L15 18" stroke="#e08a1e" strokeWidth="3" />
      </svg>
    </TaskCell>
    <div className="ml-auto flex items-center text-[12px]">
      <span className="w-[21px] h-[21px] rounded-full bg-[#1b8fd8] border-2 border-white flex items-center justify-center font-bold text-[14px]">?</span>
      <svg width="12" height="7" viewBox="0 0 12 7" fill="none" stroke="#fff" className="ml-[10px]"><path d="M1 6.5L6 1 11 6.5" /></svg>
      <svg width="16" height="15" viewBox="0 0 16 15" fill="#fff" className="ml-[11px]"><path d="M2 0H5V3H2zM4 5H15V13H4z" /><path d="M0 4H7V9H0z" fill="#cfd8dc" /></svg>
      <svg width="16" height="16" viewBox="0 0 16 16" fill="none" stroke="#d8d8d8" className="ml-[8px]"><path d="M1 14C1 7 6 2 14 1M5 15C5 10 8 6 14 5M9 15C9 12 10 10 14 9" /><circle cx="13" cy="14" r="1.5" fill="#fff" stroke="none" /></svg>
      <svg width="17" height="16" viewBox="0 0 17 16" fill="none" stroke="#fff" className="ml-[6px]"><path d="M1 5.5H4L8 1.5V14.5L4 10.5H1zM11 5C12 6.5 12 9.5 11 11M14 3C16 6 16 10 14 13" /></svg>
      <span className="ml-[11px]">РУС</span>
      <div className="ml-[11px] w-[56px] flex flex-col items-center leading-[16px] mt-[-3px] gap-[2px]">
        <span>15:45</span>
        <span className="whitespace-nowrap">27.09.2024</span>
      </div>
      <span className="ml-[18px] mr-[24px] relative w-[17px] h-[28px] flex items-center">
        <svg width="15" height="17" viewBox="0 0 15 17" className="mt-[-7px]"><path d="M0 0H15V12H5L2 15V12H0z" fill="#fff" /><path d="M3 3H12M3 6H12M3 9H9" stroke="#20373f" /></svg>
        <span className="absolute -right-[5px] bottom-[-3px] w-[17px] h-[17px] rounded-full bg-[#333] border border-[#999] flex items-center justify-center font-bold text-[11px]">6</span>
      </span>
    </div>
  </div>
);

// стрелки и замазанные области поверх скриншота
const Marks = () => (
  <svg width="1920" height="1080" className="absolute left-0 top-0 pointer-events-none">
    <path d="M34 275L95 273 187 272 187 285 140 290 110 285 34 286z" fill="#fff" />
    <path d="M888 266H1060V276L1050 281 1095 300 1118 312V320L1090 322 1000 319 897 317 897 303 960 302 1010 302 1000 295 950 281H888z" fill="#fff" />
    <g stroke="#000" strokeWidth="5" shapeRendering="crispEdges" fill="none">
      <path d="M622 348L1451 372" />
      <path d="M596 413L1510 434" />
      <path d="M586 569L1476 595" />
    </g>
    <rect x="1475.5" y="592.5" width="3" height="4" fill="#fff" stroke="#000" />
  </svg>
);

const App: React.FC = () => (
  <div className={`w-[1920px] h-[1080px] relative overflow-hidden bg-white ${sans}`}>
    <TitleBar />
    <TabRow />
    <Ribbon />
    <Canvas />
    <HScroll />
    <StatusBar />
    <Taskbar />
    <Marks />
  </div>
);

export default App;
